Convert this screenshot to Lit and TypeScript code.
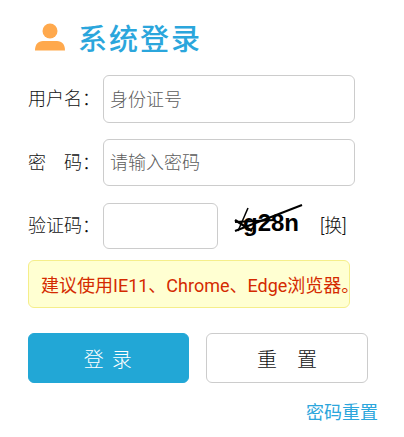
import { LitElement, html, css } from "lit";
import { customElement } from "lit/decorators.js";

@customElement("app-root")
export class AppRoot extends LitElement {
  static styles = css`
    :host {
      display: block;
      width: 404px;
      height: 437px;
      overflow: hidden;
      background: #fff;
      color: #111;
      font-family: Roboto, "Noto Sans CJK SC", sans-serif;
      font-size: 18px;
      font-weight: 300;
      box-sizing: border-box;
      padding: 19px 26px 0 28px;
    }
    .title {
      display: flex;
      align-items: center;
      height: 36px;
      padding-left: 6px;
      gap: 12px;
      margin-bottom: 20px;
    }
    .title svg { display: block; }
    .title span {
      font-family: "Noto Sans CJK SC", sans-serif;
      font-size: 29px;
      font-weight: 500;
      color: #2ba6dc;
      letter-spacing: 2px;
      line-height: 36px;
    }
    .row {
      display: flex;
      align-items: center;
    }
    .row.user { margin-bottom: 16px; }
    .row.pass { margin-bottom: 17px; }
    .row.code { margin-bottom: 11px; }
    label {
      width: 75px;
      flex: none;
      white-space: pre;
      line-height: 24px;
    }
    input {
      box-sizing: border-box;
      font: inherit;
      color: #111;
      background: #fff;
      border: 1px solid #ccc;
      border-radius: 6px;
      padding: 0 6px;
      outline: none;
      margin: 0;
    }
    input::placeholder { color: #5c5c5c; opacity: 1; }
    .wide { width: 252px; height: 48px; }
    .pass .wide { height: 47px; }
    .short { width: 115px; height: 46px; }
    .captcha {
      position: relative;
      width: 72px;
      height: 46px;
      margin-left: 15px;
      flex: none;
    }
    .captcha b {
      position: absolute;
      left: 10px;
      top: 5px;
      font-family: "Liberation Sans", sans-serif;
      font-size: 24px;
      font-weight: 700;
      line-height: 30px;
      color: #000;
    }
    .captcha svg { position: absolute; left: 0; top: 0; }
    .swap { margin-left: 15px; line-height: 24px; }
    .alert {
      box-sizing: border-box;
      width: 322px;
      height: 48px;
      background: #ffffd2;
      border: 1px solid #f5ee8a;
      border-radius: 6px;
      color: #d42a00;
      padding: 0 12px;
      display: flex;
      align-items: center;
      margin-bottom: 25px;
      white-space: nowrap;
      font-weight: 400;
    }
    .btns {
      display: flex;
      gap: 17px;
      margin-bottom: 18px;
    }
    button {
      box-sizing: border-box;
      width: 162px;
      height: 50px;
      font: inherit;
      font-size: 20px;
      border-radius: 6px;
      padding: 0;
      margin: 0;
    }
    .login {
      width: 161px;
      background: #22a7d6;
      border: 1px solid #22a7d6;
      color: #fff;
      letter-spacing: 1.5px;
    }
    .reset {
      background: #fff;
      border: 1px solid #ccc;
      color: #111;
    }
    .foot { text-align: right; line-height: 24px; font-weight: 400; }
    a { color: #2ba6dc; text-decoration: none; }
  `;

  render() {
    return html`
      <div class="title">
        <svg width="32" height="28" viewBox="0 0 32 28">
          <circle cx="16" cy="8" r="7.5" fill="#ffa94d"></circle>
          <path d="M1 27.5c0-6 3-9.5 8-9.5h14c5 0 8 3.500 8 9.500z" fill="#ffa94d"></path>
        </svg>
        <span>系统登录</span>
      </div>
      <div class="row user">
        <label>用户名：</label>
        <input class="wide" type="text" placeholder="身份证号" />
      </div>
      <div class="row pass">
        <label>密　码：</label>
        <input class="wide" type="text" placeholder="请输入密码" />
      </div>
      <div class="row code">
        <label>验证码：</label>
        <input class="short" type="text" />
        <div class="captcha">
          <b>g28n</b>
          <svg width="72" height="46" viewBox="0 0 72 46">
            <path d="M2 28 L69 2" stroke="#000" stroke-width="2" fill="none"></path>
            <path d="M2 17 L19 28" stroke="#000" stroke-width="2.500" fill="none"></path>
            <path d="M15 5 L5 28" stroke="#000" stroke-width="1.500" fill="none"></path>
            <path d="M2 19 L42 17" stroke="#000" stroke-width="2" fill="none"></path>
          </svg>
        </div>
        <span class="swap">[换]</span>
      </div>
      <div class="alert">建议使用IE11、Chrome、Edge浏览器。</div>
      <div class="btns">
        <button class="login">登 录</button>
        <button class="reset">重　置</button>
      </div>
      <div class="foot"><a href="#">密码重置</a></div>
    `;
  }
}
